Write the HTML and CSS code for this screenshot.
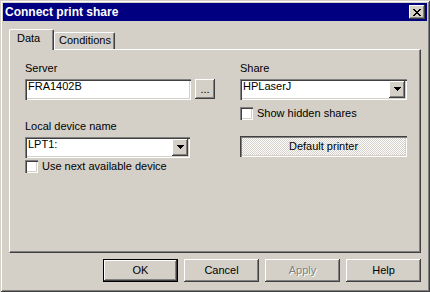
FILE: index.html
```html
<!DOCTYPE html>
<html lang="en">
<head>
    <meta charset="UTF-8">
    <meta name="viewport" content="width=device-width, initial-scale=1.0">
    <title>Connect print share</title>
    <link rel="stylesheet" href="styles.css">
</head>
<body>
    <div class="window">
        <div class="titlebar">
            <span class="title">Connect print share</span>
            <div class="close-btn" aria-label="Close">
                <svg width="8" height="7" viewBox="0 0 8 7" shape-rendering="crispEdges" fill="#000">
                    <rect x="0" y="0" width="2" height="1"/><rect x="6" y="0" width="2" height="1"/>
                    <rect x="1" y="1" width="2" height="1"/><rect x="5" y="1" width="2" height="1"/>
                    <rect x="2" y="2" width="4" height="1"/>
                    <rect x="3" y="3" width="2" height="1"/>
                    <rect x="2" y="4" width="4" height="1"/>
                    <rect x="1" y="5" width="2" height="1"/><rect x="5" y="5" width="2" height="1"/>
                    <rect x="0" y="6" width="2" height="1"/><rect x="6" y="6" width="2" height="1"/>
                </svg>
            </div>
        </div>

        <div class="content">
            <div class="tabs">
                <div class="tab active">Data</div>
                <div class="tab">Conditions</div>
            </div>

            <div class="panel">
                <div class="col">
                    <div class="label">Server</div>
                    <div class="field-row">
                        <div class="edit">FRA1402B</div>
                        <div class="btn browse">...</div>
                    </div>

                    <div class="label spaced">Local device name</div>
                    <div class="combo narrow">
                        <span class="combo-value">LPT1:</span>
                        <span class="arrow-btn">
                            <svg width="7" height="4" viewBox="0 0 7 4" shape-rendering="crispEdges" fill="#000">
                                <rect x="0" y="0" width="7" height="1"/><rect x="1" y="1" width="5" height="1"/>
                                <rect x="2" y="2" width="3" height="1"/><rect x="3" y="3" width="1" height="1"/>
                            </svg>
                        </span>
                    </div>
                    <div class="check tight">
                        <span class="box"></span>
                        <span>Use next available device</span>
                    </div>
                </div>

                <div class="col">
                    <div class="label">Share</div>
                    <div class="combo wide">
                        <span class="combo-value">HPLaserJ</span>
                        <span class="arrow-btn">
                            <svg width="7" height="4" viewBox="0 0 7 4" shape-rendering="crispEdges" fill="#000">
                                <rect x="0" y="0" width="7" height="1"/><rect x="1" y="1" width="5" height="1"/>
                                <rect x="2" y="2" width="3" height="1"/><rect x="3" y="3" width="1" height="1"/>
                            </svg>
                        </span>
                    </div>
                    <div class="check loose">
                        <span class="box"></span>
                        <span>Show hidden shares</span>
                    </div>
                    <div class="toggle">Default printer</div>
                </div>
            </div>

            <div class="buttons">
                <div class="btn push default">OK</div>
                <div class="btn push">Cancel</div>
                <div class="btn push disabled">Apply</div>
                <div class="btn push">Help</div>
            </div>
        </div>
    </div>
</body>
</html>
```

FILE: styles.css
```css
body {
    margin: 0;
    padding: 0;
    font-family: 'Liberation Sans', Arial, sans-serif;
    font-size: 11px;
    color: #000;
}

.window {
    width: 430px;
    height: 292px;
    box-sizing: border-box;
    padding: 3px;
    background-color: #d4d0c8;
    box-shadow: inset 1px 1px #d4d0c8, inset -1px -1px #404040,
                inset 2px 2px #fff, inset -2px -2px #808080;
    display: flex;
    flex-direction: column;
}

.titlebar {
    height: 18px;
    background-color: #000080;
    display: flex;
    align-items: center;
    justify-content: space-between;
    padding: 0 2px;
}

.title {
    color: #fff;
    font-weight: bold;
    font-size: 12px;
    line-height: 18px;
}

.close-btn {
    width: 16px;
    height: 14px;
    box-sizing: border-box;
    background-color: #d4d0c8;
    box-shadow: inset -1px -1px #404040, inset 1px 1px #fff,
                inset -2px -2px #808080;
    display: flex;
    align-items: center;
    justify-content: center;
}

.content {
    flex: 1;
    display: flex;
    flex-direction: column;
    padding: 8px 6px 7px;
}

/* tabs */
.tabs {
    height: 20px;
    display: flex;
    align-items: flex-end;
}

.tab {
    height: 17px;
    box-sizing: border-box;
    padding: 1px 0 0 4px;
    line-height: 13px;
    border-top: 1px solid #fff;
    border-left: 1px solid #fff;
    border-right: 1px solid #404040;
    border-radius: 2px 2px 0 0;
    box-shadow: inset -1px 0 #808080;
    background-color: #d4d0c8;
    width: 61px;
}

.tab.active {
    width: 45px;
    height: 21px;
    margin-bottom: -1px;
    padding: 2px 0 0 7px;
    position: relative;
    z-index: 1;
}

.panel {
    height: 204px;
    box-sizing: border-box;
    border-top: 1px solid #fff;
    border-left: 1px solid #fff;
    border-right: 1px solid #404040;
    border-bottom: 1px solid #404040;
    box-shadow: inset -1px -1px #808080;
    padding: 12px 15px 0;
    display: grid;
    grid-template-columns: 190px 167px;
    column-gap: 25px;
    align-items: start;
}

.col {
    display: flex;
    flex-direction: column;
}

.label {
    line-height: 13px;
}

.label.spaced {
    margin-top: 20px;
}

.field-row {
    display: flex;
    gap: 4px;
    margin-top: 4px;
    align-items: flex-start;
}

.sunken {
    box-shadow: inset 1px 1px #808080, inset 2px 2px #404040,
                inset -1px -1px #fff, inset -2px -2px #d4d0c8;
}

.edit {
    width: 166px;
    height: 21px;
    box-sizing: border-box;
    padding: 1px 3px 0;
    line-height: 13px;
    background-color: #fff;
    box-shadow: inset 1px 1px #808080, inset 2px 2px #404040,
                inset -1px -1px #fff, inset -2px -2px #d4d0c8;
}

.btn {
    box-sizing: border-box;
    background-color: #d4d0c8;
    box-shadow: inset -1px -1px #404040, inset 1px 1px #fff,
                inset -2px -2px #808080;
    display: flex;
    align-items: center;
    justify-content: center;
}

.browse {
    width: 20px;
    height: 20px;
    padding-bottom: 1px;
    letter-spacing: 0;
}

.combo {
    height: 21px;
    margin-top: 4px;
    box-sizing: border-box;
    padding: 0 2px 0 3px;
    background-color: #fff;
    box-shadow: inset 1px 1px #808080, inset 2px 2px #404040,
                inset -1px -1px #fff, inset -2px -2px #d4d0c8;
    display: flex;
    align-items: center;
}

.combo.narrow {
    width: 165px;
}

.combo.wide {
    width: 167px;
}

.combo-value {
    flex: 1;
    align-self: flex-start;
    padding-top: 1px;
    line-height: 13px;
}

.arrow-btn {
    width: 16px;
    height: 17px;
    box-sizing: border-box;
    background-color: #d4d0c8;
    box-shadow: inset -1px -1px #404040, inset 1px 1px #fff,
                inset -2px -2px #808080;
    display: flex;
    align-items: center;
    justify-content: center;
    padding-bottom: 1px;
}

.check {
    display: flex;
    align-items: center;
    gap: 4px;
    line-height: 13px;
}

.check.tight {
    margin-top: 2px;
}

.check.loose {
    margin-top: 7px;
}

.box {
    width: 13px;
    height: 13px;
    box-sizing: border-box;
    background-color: #fff;
    box-shadow: inset 1px 1px #808080, inset 2px 2px #404040,
                inset -1px -1px #fff, inset -2px -2px #d4d0c8;
}

.toggle {
    margin-top: 16px;
    height: 21px;
    line-height: 21px;
    text-align: center;
    background: repeating-conic-gradient(#fff 0 25%, #d4d0c8 0 50%) 0 0 / 2px 2px;
    box-shadow: inset 1px 1px #404040, inset 2px 2px #808080,
                inset -1px -1px #fff, inset -2px -2px #d4d0c8;
}

/* dialog buttons */
.buttons {
    margin-top: 6px;
    display: flex;
    justify-content: flex-end;
    gap: 6px;
}

.push {
    width: 75px;
    height: 23px;
    padding-bottom: 2px;
}

.push.default {
    border: 1px solid #000;
}

.push.disabled {
    color: #808080;
    text-shadow: 1px 1px #fff;
}
```
